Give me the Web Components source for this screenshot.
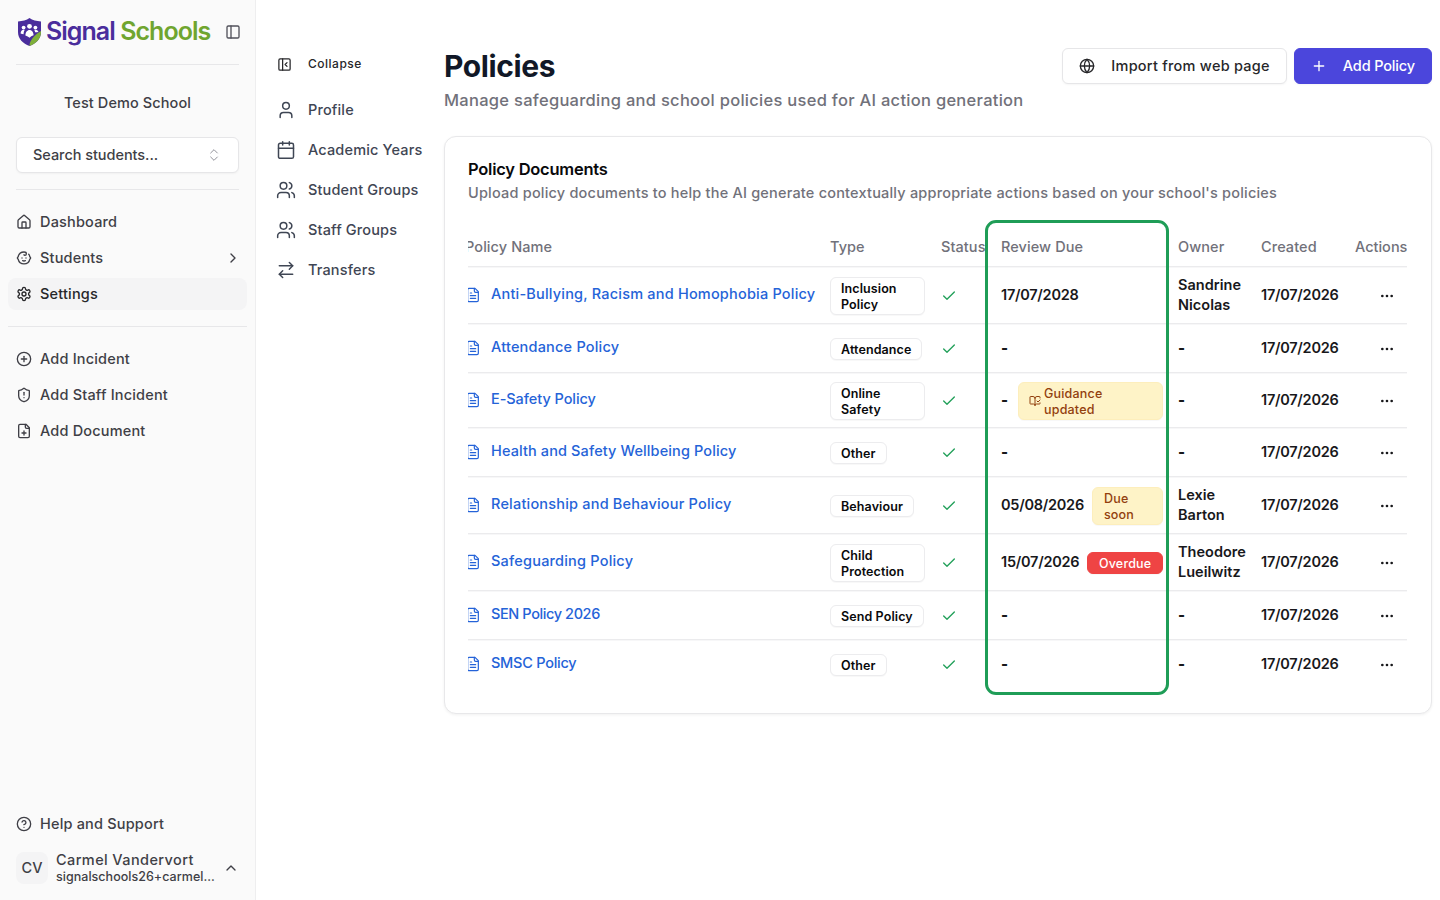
<!DOCTYPE html>
<html lang="en">
<head>
<meta charset="utf-8">
<title>Policies</title>
<style>
html,body{margin:0;padding:0;background:#fff;}
body{font-family:Inter,"Liberation Sans",sans-serif;}
</style>
</head>
<body>
<app-page>
  <app-sidebar slot="sidebar"></app-sidebar>
  <settings-nav slot="subnav"></settings-nav>
  <section slot="content">
    <page-header></page-header>
    <policy-card></policy-card>
  </section>
</app-page>
<script>
const ICONS={
 panel:'<rect x="3" y="3" width="18" height="18" rx="2"/><path d="M9 3v18"/>',
 collapse:'<rect x="3" y="3" width="18" height="18" rx="2"/><path d="M9 3v18"/><path d="m16 15-3-3 3-3"/>',
 updown:'<path d="m7 15 5 5 5-5"/><path d="m7 9 5-5 5 5"/>',
 house:'<path d="M15 21v-8a1 1 0 0 0-1-1h-4a1 1 0 0 0-1 1v8"/><path d="M3 10a2 2 0 0 1 .709-1.528l7-5.999a2 2 0 0 1 2.582 0l7 5.999A2 2 0 0 1 21 10v9a2 2 0 0 1-2 2H5a2 2 0 0 1-2-2z"/>',
 baby:'<path d="M9 12h.01"/><path d="M15 12h.01"/><path d="M10 16c.5.3 1.2.5 2 .5s1.5-.2 2-.5"/><path d="M19 6.3a9 9 0 0 1 1.8 3.9 2 2 0 0 1 0 3.6 9 9 0 0 1-17.6 0 2 2 0 0 1 0-3.6A9 9 0 0 1 12 3c2 0 3.5 1.1 3.5 2.5s-.9 2.5-2 2.5c-.8 0-1.5-.4-1.5-1"/>',
 gear:'<path d="M12.22 2h-.44a2 2 0 0 0-2 2v.18a2 2 0 0 1-1 1.73l-.43.25a2 2 0 0 1-2 0l-.15-.08a2 2 0 0 0-2.73.73l-.22.38a2 2 0 0 0 .73 2.73l.15.1a2 2 0 0 1 1 1.72v.51a2 2 0 0 1-1 1.74l-.15.09a2 2 0 0 0-.73 2.73l.22.38a2 2 0 0 0 2.73.73l.15-.08a2 2 0 0 1 2 0l.43.25a2 2 0 0 1 1 1.73V20a2 2 0 0 0 2 2h.44a2 2 0 0 0 2-2v-.18a2 2 0 0 1 1-1.73l.43-.25a2 2 0 0 1 2 0l.15.08a2 2 0 0 0 2.73-.73l.22-.39a2 2 0 0 0-.73-2.73l-.15-.08a2 2 0 0 1-1-1.74v-.5a2 2 0 0 1 1-1.74l.15-.09a2 2 0 0 0 .73-2.73l-.22-.38a2 2 0 0 0-2.73-.73l-.15.08a2 2 0 0 1-2 0l-.43-.25a2 2 0 0 1-1-1.73V4a2 2 0 0 0-2-2z"/><circle cx="12" cy="12" r="3"/>',
 circleplus:'<circle cx="12" cy="12" r="10"/><path d="M8 12h8"/><path d="M12 8v8"/>',
 shield:'<path d="M20 13c0 5-3.5 7.5-7.66 8.95a1 1 0 0 1-.67-.01C7.5 20.5 4 18 4 13V6a1 1 0 0 1 1-1c2 0 4.5-1.2 6.24-2.72a1.17 1.17 0 0 1 1.52 0C14.51 3.81 17 5 19 5a1 1 0 0 1 1 1z"/><path d="M12 8v4"/><path d="M12 16h.01"/>',
 fileplus:'<path d="M15 2H6a2 2 0 0 0-2 2v16a2 2 0 0 0 2 2h12a2 2 0 0 0 2-2V7Z"/><path d="M14 2v4a2 2 0 0 0 2 2h4"/><path d="M9 15h6"/><path d="M12 18v-6"/>',
 help:'<circle cx="12" cy="12" r="10"/><path d="M9.09 9a3 3 0 0 1 5.83 1c0 2-3 3-3 3"/><path d="M12 17h.01"/>',
 right:'<path d="m9 18 6-6-6-6"/>',
 up:'<path d="m18 15-6-6-6 6"/>',
 user:'<path d="M19 21v-2a4 4 0 0 0-4-4H9a4 4 0 0 0-4 4v2"/><circle cx="12" cy="7" r="4"/>',
 calendar:'<path d="M8 2v4"/><path d="M16 2v4"/><rect x="3" y="4" width="18" height="18" rx="2"/><path d="M3 10h18"/>',
 users:'<path d="M16 21v-2a4 4 0 0 0-4-4H6a4 4 0 0 0-4 4v2"/><circle cx="9" cy="7" r="4"/><path d="M22 21v-2a4 4 0 0 0-3-3.87"/><path d="M16 3.13a4 4 0 0 1 0 7.75"/>',
 transfer:'<path d="m16 3 4 4-4 4"/><path d="M20 7H4"/><path d="m8 21-4-4 4-4"/><path d="M4 17h16"/>',
 globe:'<circle cx="12" cy="12" r="10"/><path d="M12 2a14.5 14.5 0 0 0 0 20 14.5 14.5 0 0 0 0-20"/><path d="M2 12h20"/>',
 plus:'<path d="M5 12h14"/><path d="M12 5v14"/>',
 filetext:'<path d="M15 2H6a2 2 0 0 0-2 2v16a2 2 0 0 0 2 2h12a2 2 0 0 0 2-2V7Z"/><path d="M14 2v4a2 2 0 0 0 2 2h4"/><path d="M10 9H8"/><path d="M16 13H8"/><path d="M16 17H8"/>',
 check:'<path d="M20 6 9 17l-5-5"/>',
 dots:'<circle cx="12" cy="12" r="1"/><circle cx="19" cy="12" r="1"/><circle cx="5" cy="12" r="1"/>',
 book:'<path d="M12 21V7"/><path d="m16 12 2 2 4-4"/><path d="M22 6V4a1 1 0 0 0-1-1h-5a4 4 0 0 0-4 4 4 4 0 0 0-4-4H3a1 1 0 0 0-1 1v13a1 1 0 0 0 1 1h6a3 3 0 0 1 3 3 3 3 0 0 1 3-3h6a1 1 0 0 0 1-1v-1.3"/>'
};
const base=(el,html)=>{el.attachShadow({mode:'open'}).innerHTML=html;};

customElements.define('ui-icon',class extends HTMLElement{
 connectedCallback(){
  const s=this.getAttribute('size')||16,w=this.getAttribute('stroke')||2;
  base(this,`<style>:host{display:inline-flex;flex:none;width:${s}px;height:${s}px}svg{display:block}</style>
  <svg xmlns="http://www.w3.org/2000/svg" width="${s}" height="${s}" viewBox="0 0 24 24" fill="none" stroke="currentColor" stroke-width="${w}" stroke-linecap="round" stroke-linejoin="round">${ICONS[this.getAttribute('name')]}</svg>`);
 }
});

customElements.define('app-page',class extends HTMLElement{
 connectedCallback(){
  base(this,`<style>
  :host{display:flex;width:1440px;height:900px;overflow:hidden;background:#fff;color:#18181b}
  .side{flex:none;width:256px;display:flex}
  .sub{flex:none;width:188px}
  .content{flex:1;min-width:0;padding:48px 8px 0 0}
  </style>
  <div class="side"><slot name="sidebar"></slot></div>
  <div class="sub"><slot name="subnav"></slot></div>
  <div class="content"><slot name="content"></slot></div>`);
 }
});

customElements.define('brand-logo',class extends HTMLElement{
 connectedCallback(){
  base(this,`<style>
  :host{display:flex;align-items:center;gap:4px}
  svg{display:block;flex:none}
  .w{font:600 25px/28px Inter,sans-serif;letter-spacing:-.97px;white-space:nowrap;padding-bottom:2px}
  .a{color:#4a2d9c}.b{color:#6fa52f}
  </style>
  <svg width="25" height="30" viewBox="0 0 25 30">
   <path d="M12.5 1 C15.5 3.2 19.5 4.2 24 4.4 V15 C24 22 19 26.5 12.5 29 C6 26.5 1 22 1 15 V4.4 C5.5 4.2 9.5 3.2 12.5 1Z" fill="#4a2d9c"/>
   <path d="M24 14 V15 C24 22 19 26.5 12.5 29 C12.2 25 16 18.5 24 14Z" fill="#7fb03a"/>
   <g fill="#fff"><circle cx="12.5" cy="9.3" r="2.4"/><circle cx="6.6" cy="10.6" r="1.9"/><circle cx="18.4" cy="10.6" r="1.9"/>
   <path d="M8.4 18.5c0-3.4 1.8-5.6 4.1-5.6s4.1 2.2 4.1 5.3c-1.8 .5-3 1.4-4 2.6-1.2-1-2.6-1.9-4.2-2.3Z"/>
   <path d="M3.6 16.4c0-2 1.3-3.7 3-3.7.5 0 .8.1 1.1.3-.7 1-1.1 2.5-1.1 4.2-1-.2-2-.5-3-.8Z"/><path d="M21.4 15c0-1.2-1.3-2.3-3-2.3-.5 0-.8.1-1.1.3.4.6.7 1.3.8 2.3 1.1-.1 2.2-.2 3.3-.3Z"/></g>
  </svg>
  <span class="w"><span class="a">Signal</span> <span class="b">Schools</span></span>`);
 }
});

customElements.define('side-item',class extends HTMLElement{
 connectedCallback(){
  const chev=this.hasAttribute('chevron')?'<ui-icon name="right" size="16" style="margin-right:-2px"></ui-icon>':'';
  base(this,`<style>
  :host{display:flex;align-items:center;gap:8px;height:32px;margin:0 8px;padding:0 8px;border-radius:8px;color:#3f3f46;font:550 14.5px/20px Inter,sans-serif;letter-spacing:.18px}
  :host([active]){background:#f4f4f5;color:#27272a}
  .t{flex:1;white-space:nowrap}
  </style><ui-icon name="${this.getAttribute('icon')}" size="16"></ui-icon><span class="t"><slot></slot></span>${chev}`);
 }
});

customElements.define('app-sidebar',class extends HTMLElement{
 connectedCallback(){
  base(this,`<style>
  :host{display:flex;flex-direction:column;width:256px;box-sizing:border-box;height:900px;background:#fafafa;border-right:1px solid #eeeeef;font-family:Inter,sans-serif}
  .brand{display:flex;align-items:center;justify-content:space-between;height:30px;padding:17px 14px 0 17px;color:#52525b}
  .hr{height:1px;background:#e7e7e9;margin:0 16px}
  .school{margin-top:28px;text-align:center;font:500 14.5px/20px Inter,sans-serif;letter-spacing:.1px;color:#3f3f46}
  .search{display:flex;align-items:center;justify-content:space-between;box-sizing:border-box;margin:24px 16px 16px;height:36px;padding:0 16px;background:#fff;border:1px solid #e6e6e8;border-radius:6px;box-shadow:0 1px 2px rgba(0,0,0,.04);font:500 14.5px/20px Inter,sans-serif;letter-spacing:-.05px;color:#3f3f46}
  .search ui-icon{color:#8a8a92}
  .nav{display:flex;flex-direction:column;gap:4px;margin-top:16px}
  .hr2{height:1px;background:#e7e7e9;margin:16px 8px}
  .grow{flex:1}
  .user{display:flex;align-items:center;gap:8px;padding:0 16px;height:48px;margin:4px 0 8px}
  .av{width:32px;height:32px;border-radius:8px;background:#f4f4f5;display:flex;align-items:center;justify-content:center;font:550 14.5px/1 Inter,sans-serif;color:#3f3f46;flex:none}
  .who{flex:1;min-width:0;color:#3f3f46}
  .n{font:550 14.5px/17px Inter,sans-serif;letter-spacing:.4px;white-space:nowrap}
  .e{font:500 12.5px/16px Inter,sans-serif;white-space:nowrap;letter-spacing:.03px;margin-top:1px}
  .user ui-icon{color:#3f3f46}
  </style>
  <div class="brand"><brand-logo></brand-logo><ui-icon name="panel" size="16"></ui-icon></div>
  <div class="hr" style="margin-top:17px"></div>
  <div class="school">Test Demo School</div>
  <div class="search"><span>Search students...</span><ui-icon name="updown" size="16" stroke="1.4"></ui-icon></div>
  <div class="hr"></div>
  <div class="nav">
   <side-item icon="house">Dashboard</side-item>
   <side-item icon="baby" chevron>Students</side-item>
   <side-item icon="gear" active>Settings</side-item>
  </div>
  <div class="hr2"></div>
  <div class="nav" style="margin-top:0">
   <side-item icon="circleplus">Add Incident</side-item>
   <side-item icon="shield">Add Staff Incident</side-item>
   <side-item icon="fileplus">Add Document</side-item>
  </div>
  <div class="grow"></div>
  <side-item icon="help">Help and Support</side-item>
  <div class="user"><div class="av">CV</div><div class="who"><div class="n">Carmel Vandervort</div><div class="e">signalschools26+carmel...</div></div><ui-icon name="up" size="16"></ui-icon></div>`);
 }
});

customElements.define('settings-link',class extends HTMLElement{
 connectedCallback(){
  base(this,`<style>
  :host{display:flex;align-items:center;gap:12px;height:40px;color:#3f4654;font:500 14.5px/20px Inter,sans-serif;letter-spacing:.15px;white-space:nowrap}
  </style><ui-icon name="${this.getAttribute('icon')}" size="20" stroke="1.8"></ui-icon><slot></slot>`);
 }
});

customElements.define('settings-nav',class extends HTMLElement{
 connectedCallback(){
  base(this,`<style>
  :host{display:block;padding:48px 0 0 20px}
  .c{display:flex;align-items:center;gap:16px;height:32px;color:#27272a;font:500 12px/16px Inter,sans-serif;letter-spacing:.5px;margin-bottom:10px;padding-left:1px}
  </style>
  <div class="c"><ui-icon name="collapse" size="15" stroke="2"></ui-icon>Collapse</div>
  <settings-link icon="user">Profile</settings-link>
  <settings-link icon="calendar">Academic Years</settings-link>
  <settings-link icon="users">Student Groups</settings-link>
  <settings-link icon="users">Staff Groups</settings-link>
  <settings-link icon="transfer">Transfers</settings-link>`);
 }
});

customElements.define('ui-button',class extends HTMLElement{
 connectedCallback(){
  base(this,`<style>
  :host{display:inline-flex;align-items:center;gap:16px;box-sizing:border-box;height:36px;padding:0 16px;border-radius:6px;border:1px solid #e6e6e8;background:#fff;color:#27272a;font:500 14.5px/20px Inter,sans-serif;letter-spacing:.25px;white-space:nowrap;box-shadow:0 1px 2px rgba(0,0,0,.04)}
  :host([primary]){background:#4b46dc;border-color:#4b46dc;color:#fff;letter-spacing:-.15px}
  </style><ui-icon name="${this.getAttribute('icon')}" size="16"></ui-icon><slot></slot>`);
 }
});

customElements.define('page-header',class extends HTMLElement{
 connectedCallback(){
  base(this,`<style>
  :host{display:flex;justify-content:space-between;align-items:flex-start;height:88px}
  h1{margin:0 0 4px;font:700 30px/36px Inter,sans-serif;letter-spacing:-.4px;color:#111827}
  p{margin:0;font:500 16.5px/24px Inter,sans-serif;letter-spacing:.28px;color:#71717a}
  .b{display:flex;gap:7px}
  </style>
  <div><h1>Policies</h1><p>Manage safeguarding and school policies used for AI action generation</p></div>
  <div class="b"><ui-button icon="globe">Import from web page</ui-button><ui-button icon="plus" primary>Add Policy</ui-button></div>`);
 }
});

const COLS='362px 111px 60px 177px 83px 94px 52px';

customElements.define('type-pill',class extends HTMLElement{
 connectedCallback(){
  base(this,`<style>
  :host{display:inline-block;box-sizing:border-box;max-width:95px;padding:3px 10px 1px;border:1px solid #ececee;border-radius:6px;background:#fff;color:#09090b;font:600 12.5px/16px Inter,sans-serif;letter-spacing:.1px;box-shadow:0 1px 1px rgba(0,0,0,.03);transform:translateY(1px)}
  </style><slot></slot>`);
 }
});

customElements.define('due-badge',class extends HTMLElement{
 connectedCallback(){
  const icon=this.getAttribute('icon');
  base(this,`<style>
  :host{flex:1;min-width:0;display:flex;align-items:center;gap:3px;box-sizing:border-box;padding:3px 10px 1px;border:1px solid #fdeebc;border-radius:6px;background:#fef3c7;color:#92400e;font:550 12.5px/16px Inter,sans-serif;letter-spacing:.2px;box-shadow:0 1px 1px rgba(0,0,0,.03);transform:translateY(1px)}
  :host(:not([icon])){padding-left:11px}
  :host([tone=red]){background:#ef4444;border-color:#ef4444;color:#fff;justify-content:center;padding:3px 4px 1px}
  </style>${icon?`<ui-icon name="${icon}" size="12" stroke="2" style="margin-top:-2px"></ui-icon>`:''}<span><slot></slot></span>`);
 }
});

customElements.define('policy-row',class extends HTMLElement{
 connectedCallback(){
  const a=n=>this.getAttribute(n)||'';
  const dash='<span class="dash">-</span>';
  const date=s=>`<span class="date">${s}</span>`;
  let badge='';
  if(a('badge')==='guidance')badge='<due-badge icon="book">Guidance updated</due-badge>';
  if(a('badge')==='soon')badge='<due-badge>Due soon</due-badge>';
  if(a('badge')==='over')badge='<due-badge tone="red">Overdue</due-badge>';
  base(this,`<style>
  :host{display:grid;grid-template-columns:${COLS};align-items:center;border-bottom:1px solid #ebebed;box-shadow:0 1px 0 #f7f7f8;font:600 14.5px/20px Inter,sans-serif;letter-spacing:.02px;color:#18181b;padding:8px 0}
  :host([last]){border-bottom:0;box-shadow:none}
  .name{display:flex;align-items:center;gap:10px;margin-left:-3px;color:#2563d8;font-weight:500;letter-spacing:${a('ls')||'.2'}px;white-space:nowrap;padding-bottom:3px}
  .name ui-icon{position:relative;top:1px}
  .st{display:flex;align-items:center;color:#22a05a;transform:translateY(1px)}
  .rv{display:flex;align-items:center;gap:8px;padding-right:15px;white-space:nowrap}
  .rv due-badge{white-space:normal}
  .date{letter-spacing:-.25px}
  .dash{display:inline-block;min-width:9px;font-weight:800;font-size:15px}
  .act{display:flex;justify-content:flex-end;height:32px;align-items:center;padding-right:12px;color:#18181b;transform:translateY(1px)}
  </style>
  <div class="name"><ui-icon name="filetext" size="16" stroke="1.8"></ui-icon><span>${a('name')}</span></div>
  <div><type-pill>${a('type')}</type-pill></div>
  <div class="st"><ui-icon name="check" size="16" stroke="2"></ui-icon></div>
  <div class="rv">${a('review')?date(a('review')):dash}${badge}</div>
  <div>${a('owner')||dash}</div>
  <div>${date(a('created'))}</div>
  <div class="act"><ui-icon name="dots" size="16" stroke="2"></ui-icon></div>`);
 }
});

customElements.define('policy-card',class extends HTMLElement{
 connectedCallback(){
  const rows=[
   ['Anti-Bullying, Racism and Homophobia Policy','Inclusion Policy','17/07/2028','','Sandrine Nicolas'],
   ['Attendance Policy','Attendance','','',''],
   ['E-Safety Policy','Online Safety','','guidance','','-.07'],
   ['Health and Safety Wellbeing Policy','Other','','','','.11'],
   ['Relationship and Behaviour Policy','Behaviour','05/08/2026','soon','Lexie Barton'],
   ['Safeguarding Policy','Child Protection','15/07/2026','over','Theodore Lueilwitz'],
   ['SEN Policy 2026','Send Policy','','','','-.4'],
   ['SMSC Policy','Other','','','','-.25']
  ];
  base(this,`<style>
  :host{display:block;box-sizing:border-box;height:578px;padding:24px 23px;border:1px solid #e8e8ea;border-radius:12px;background:#fff;box-shadow:0 1px 3px rgba(0,0,0,.06)}
  h2{margin:0;font:600 16.5px/16px Inter,sans-serif;letter-spacing:-.25px;color:#09090b}
  p{margin:6px 0 25px;font:500 14.5px/20px Inter,sans-serif;letter-spacing:.2px;color:#71717a}
  .wrap{position:relative}
  .clip{overflow:hidden;margin-right:1px}
  .head{display:grid;grid-template-columns:${COLS};height:39px;align-items:center;box-sizing:border-box;border-bottom:1px solid #ebebed;box-shadow:0 1px 0 #f7f7f8;font:500 14.5px/20px Inter,sans-serif;letter-spacing:.08px;color:#71717a;white-space:nowrap}
  .head span:first-child{margin-left:-3px}
  .head span:last-child{letter-spacing:0}
  .mark{position:absolute;left:517px;top:-8px;width:184px;height:475px;box-sizing:border-box;border:3px solid #1f9d57;border-radius:11px;pointer-events:none}
  </style>
  <h2>Policy Documents</h2>
  <p>Upload policy documents to help the AI generate contextually appropriate actions based on your school's policies</p>
  <div class="wrap">
   <div class="clip">
    <div class="head"><span>Policy Name</span><span>Type</span><span>Status</span><span>Review Due</span><span>Owner</span><span>Created</span><span>Actions</span></div>
    <div id="rows"></div>
   </div>
   <div class="mark"></div>
  </div>`);
  const box=this.shadowRoot.getElementById('rows');
  rows.forEach((r,i)=>{
   const el=document.createElement('policy-row');
   el.setAttribute('name',r[0]);el.setAttribute('type',r[1]);
   if(r[2])el.setAttribute('review',r[2]);
   if(r[3])el.setAttribute('badge',r[3]);
   if(r[4])el.setAttribute('owner',r[4]);
   if(r[5])el.setAttribute('ls',r[5]);
   el.setAttribute('created','17/07/2026');
   if(i===rows.length-1)el.setAttribute('last','');
   box.appendChild(el);
  });
 }
});
</script>
</body>
</html>
